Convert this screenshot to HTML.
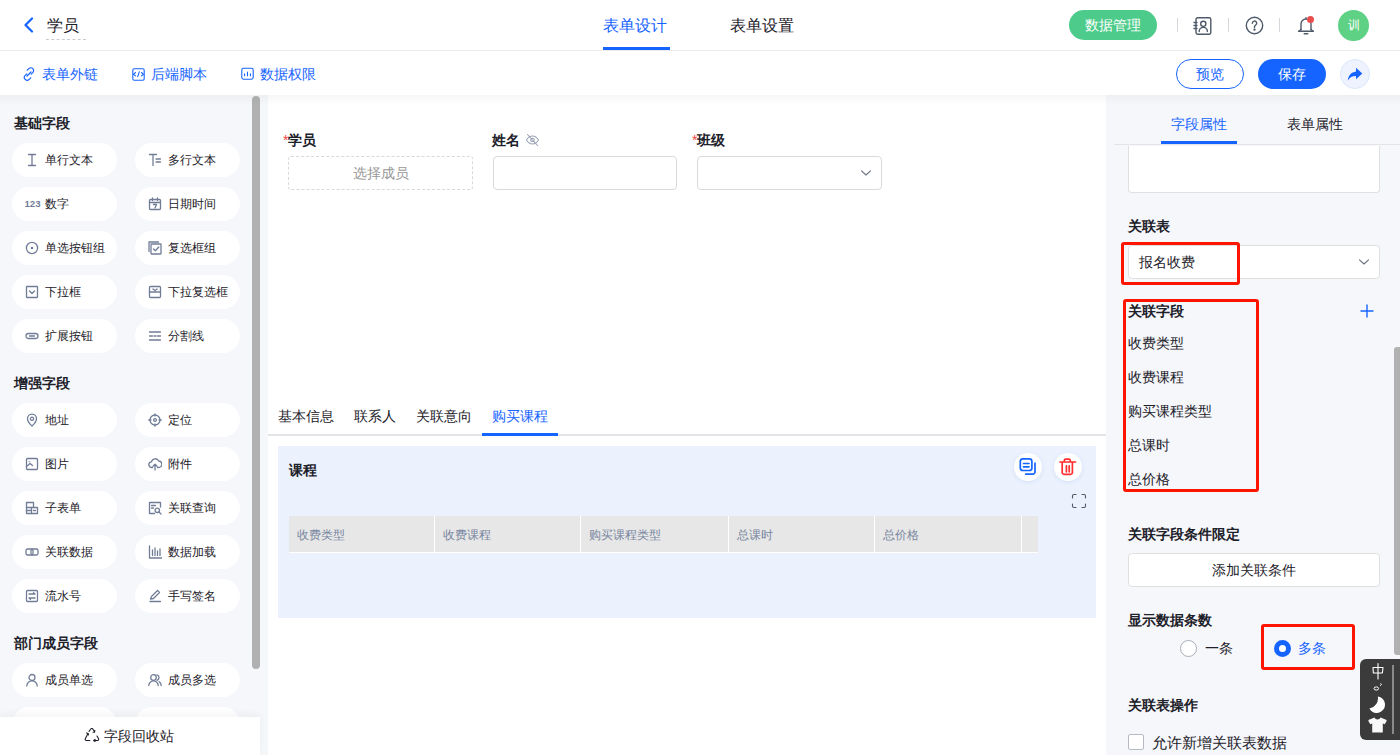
<!DOCTYPE html>
<html><head><meta charset="utf-8">
<style>
*{box-sizing:border-box;margin:0;padding:0}
html,body{width:1400px;height:755px;overflow:hidden;background:#fff;font-family:"Liberation Sans",sans-serif;font-size:14px;color:#1d2129}
.a{position:absolute}
.blue{color:#1664ff}
svg{display:block}
/* header */
#hdr{left:0;top:0;width:1400px;height:51px;border-bottom:1px solid #ebebeb;background:#fff}
#tb{left:0;top:51px;width:1400px;height:44px;background:#fff}
.tbi{top:66px;font-size:14px;color:#1664ff;line-height:16px;white-space:nowrap}
.sep{top:18px;width:1px;height:14px;background:#d5d7dc}
/* left */
#left{left:0;top:95px;width:268px;height:660px;background:#f5f7fb}
.sec{font-weight:bold;font-size:14px;line-height:16px;color:#1d2129;left:14px}
.pill{width:105px;height:34px;border-radius:17px;background:#fff;font-size:12px;line-height:34px;color:#1d2129;white-space:nowrap}
.pill .t{position:absolute;left:33px;top:0}
.pill svg{position:absolute;left:13px;top:10px}
#canvas{left:268px;top:95px;width:838px;height:660px;background:#fff}
#right{left:1106px;top:95px;width:294px;height:660px;background:#f5f7fb}
.shadow{left:0;top:95px;width:1400px;height:10px;background:linear-gradient(rgba(0,0,0,0.035),rgba(0,0,0,0))}
.lbl{font-weight:bold;font-size:14px;line-height:16px;color:#1d2129;white-space:nowrap}
.req{color:#f53f3f;font-weight:normal}
.rsec{left:1128px;font-weight:bold;font-size:14px;line-height:16px;color:#1d2129;white-space:nowrap}
.fld{left:1128px;font-size:14px;line-height:16px;color:#1d2129;white-space:nowrap}
.th{top:527px;font-size:12px;line-height:16px;color:#7886a0;white-space:nowrap}
.redbox{border:3px solid #ff1400;border-radius:3px}
</style></head><body>

<!-- HEADER -->
<div id="hdr" class="a"></div>
<svg class="a" style="left:22px;top:17px" width="14" height="16" viewBox="0 0 14 16"><path d="M10 1.5 L3.5 8 L10 14.5" fill="none" stroke="#1664ff" stroke-width="2.2" stroke-linecap="round" stroke-linejoin="round"/></svg>
<div class="a" style="left:47px;top:17px;font-size:16px;line-height:18px;color:#1d2129">学员</div>
<div class="a" style="left:46px;top:39px;width:40px;height:0;border-top:1px dashed #ccc"></div>

<div class="a blue" style="left:603px;top:17px;font-size:16px;line-height:18px">表单设计</div>
<div class="a" style="left:603px;top:47px;width:67px;height:3px;background:#1664ff"></div>
<div class="a" style="left:730px;top:17px;font-size:16px;line-height:18px;color:#1d2129">表单设置</div>

<div class="a" style="left:1069px;top:10px;width:88px;height:30px;border-radius:15px;background:#4ccb8a;color:#fff;font-size:14px;line-height:30px;text-align:center">数据管理</div>
<div class="a sep" style="left:1177px"></div>
<div class="a sep" style="left:1228px"></div>
<div class="a sep" style="left:1279px"></div>
<svg class="a" style="left:1193px;top:17px" width="19" height="18" viewBox="0 0 19 18" fill="none" stroke="#4e5969" stroke-width="1.4" stroke-linecap="round" stroke-linejoin="round"><rect x="3" y="0.8" width="14.8" height="16.4" rx="1.6"/><path d="M1 5.5h3M1 8.5h3M1 11.5h3"/><circle cx="10.3" cy="6.8" r="2.6"/><path d="M6.2 14.5a4.1 4.1 0 0 1 8.2 0"/></svg>
<svg class="a" style="left:1245px;top:16px" width="19" height="19" viewBox="0 0 19 19" fill="none" stroke="#4e5969" stroke-width="1.4" stroke-linecap="round" stroke-linejoin="round"><circle cx="9.5" cy="9.5" r="8.2"/><path d="M7.3 7.3a2.2 2.2 0 1 1 3.3 1.9c-.7.4-1.1.9-1.1 1.6v.7"/><circle cx="9.5" cy="13.6" r="0.5" fill="#4e5969"/></svg>
<svg class="a" style="left:1297px;top:16px" width="18" height="19" viewBox="0 0 18 19" fill="none" stroke="#4e5969" stroke-width="1.4" stroke-linecap="round" stroke-linejoin="round"><path d="M9 1.6v1.2M4 13.5V8a5 5 0 0 1 10 0v5.5M1.8 15.2h14.4M7.2 17.8h3.6"/><path d="M4 13.5l-2.2 1.7M14 13.5l2.2 1.7"/></svg>
<div class="a" style="left:1307px;top:16px;width:7px;height:7px;border-radius:50%;background:#eb4d4d"></div>
<div class="a" style="left:1338px;top:10px;width:31px;height:31px;border-radius:50%;background:#5fd185;color:#fff;font-size:12px;line-height:31px;text-align:center">训</div>

<!-- TOOLBAR -->
<div id="tb" class="a"></div>
<svg class="a" style="left:22px;top:67px" width="14" height="14" viewBox="0 0 14 14" fill="none" stroke="#1664ff" stroke-width="1.2" stroke-linecap="round"><path d="M5.2 3.2l1.6-1.6a2.8 2.8 0 0 1 4 4L9.2 7.2M8.8 10.8l-1.6 1.6a2.8 2.8 0 0 1-4-4l1.6-1.6M5 9l4-4"/></svg>
<svg class="a" style="left:132px;top:68px" width="13" height="13" viewBox="0 0 13 13" fill="none" stroke="#1664ff" stroke-width="1.1" stroke-linecap="round" stroke-linejoin="round"><rect x="0.8" y="0.8" width="11.4" height="11.4" rx="1.4"/><path d="M3.5 4.5L1.5 6.3l2 1.6M9.5 4.5l2 1.8-2 1.6M7.3 3.8L5.7 8.6"/></svg>
<svg class="a" style="left:241px;top:67px" width="13" height="13" viewBox="0 0 13 13" fill="none" stroke="#1664ff" stroke-width="1.1" stroke-linecap="round"><rect x="0.8" y="1.3" width="11.4" height="10.9" rx="1.6"/><path d="M3.6 6.8v2M6.5 5v3.8M9.4 6.8v2"/></svg>
<div class="a tbi" style="left:42px">表单外链</div>
<div class="a tbi" style="left:151px">后端脚本</div>
<div class="a tbi" style="left:260px">数据权限</div>

<div class="a" style="left:1176px;top:59px;width:68px;height:30px;border:1px solid #1664ff;border-radius:15px;color:#1664ff;font-size:14px;line-height:28px;text-align:center">预览</div>
<div class="a" style="left:1258px;top:59px;width:68px;height:30px;border-radius:15px;background:#1664ff;color:#fff;font-size:14px;line-height:30px;text-align:center">保存</div>
<div class="a" style="left:1340px;top:59px;width:30px;height:30px;border-radius:50%;background:#eef3ff;border:1px solid #dbe5fb"></div>

<svg class="a" style="left:1347px;top:67px" width="16" height="15" viewBox="0 0 16 15"><path d="M9 0.8L15.3 6.6 9 12.3V9.1C5.4 9 2.8 10.2 0.8 13.6 1.2 8.6 4.1 5.2 9 4.5z" fill="#1664ff"/></svg>
<!-- LEFT -->
<div id="left" class="a"></div>
<div id="canvas" class="a"></div>
<div id="right" class="a"></div>
<div class="a sec" style="top:115px">基础字段</div>
<div class="a sec" style="top:375px">增强字段</div>
<div class="a sec" style="top:635px">部门成员字段</div>
<div class="a pill" style="left:12px;top:143px"><svg width="14" height="14" viewBox="0 0 14 14" fill="none" stroke="#717d97" stroke-width="1.3" stroke-linecap="round" stroke-linejoin="round"><path d="M3.5 1.5h7M3.5 12.5h7M7 1.5v11"/></svg><span class="t">单行文本</span></div>
<div class="a pill" style="left:135px;top:143px"><svg width="14" height="14" viewBox="0 0 14 14" fill="none" stroke="#717d97" stroke-width="1.3" stroke-linecap="round" stroke-linejoin="round"><path d="M1.5 1.5h7M5 1.5v11M8 6h4.5M8 9h4.5"/></svg><span class="t">多行文本</span></div>
<div class="a pill" style="left:12px;top:187px"><svg width="16" height="14" viewBox="0 0 16 14"><text x="-0.5" y="10.2" style="font-family:'Liberation Sans',sans-serif;font-weight:bold;font-size:9.6px" fill="#717d97">123</text></svg><span class="t">数字</span></div>
<div class="a pill" style="left:135px;top:187px"><svg width="14" height="14" viewBox="0 0 14 14" fill="none" stroke="#717d97" stroke-width="1.3" stroke-linecap="round" stroke-linejoin="round"><rect x="1.5" y="2.5" width="11" height="10" rx="1"/><path d="M1.5 5.5h11M4.5 1v2.5M9.5 1v2.5M5.5 7.5h3l-1.5 3.5"/></svg><span class="t">日期时间</span></div>
<div class="a pill" style="left:12px;top:231px"><svg width="14" height="14" viewBox="0 0 14 14" fill="none" stroke="#717d97" stroke-width="1.3" stroke-linecap="round" stroke-linejoin="round"><circle cx="7" cy="7" r="5.6"/><circle cx="7" cy="7" r="1.3" fill="#717d97" stroke="none"/></svg><span class="t">单选按钮组</span></div>
<div class="a pill" style="left:135px;top:231px"><svg width="14" height="14" viewBox="0 0 14 14" fill="none" stroke="#717d97" stroke-width="1.3" stroke-linecap="round" stroke-linejoin="round"><path d="M1 10.5V1h9.5"/><rect x="3" y="3" width="10" height="10" rx="0.5"/><path d="M5.5 8l1.8 1.8L10.8 6"/></svg><span class="t">复选框组</span></div>
<div class="a pill" style="left:12px;top:275px"><svg width="14" height="14" viewBox="0 0 14 14" fill="none" stroke="#717d97" stroke-width="1.3" stroke-linecap="round" stroke-linejoin="round"><rect x="1.5" y="1.5" width="11" height="11" rx="0.5"/><path d="M4.5 6l2.5 2.5L9.5 6"/></svg><span class="t">下拉框</span></div>
<div class="a pill" style="left:135px;top:275px"><svg width="14" height="14" viewBox="0 0 14 14" fill="none" stroke="#717d97" stroke-width="1.3" stroke-linecap="round" stroke-linejoin="round"><rect x="1.5" y="1.5" width="11" height="11" rx="1"/><path d="M1.5 7h11M5 4l2 1.5L9 4"/></svg><span class="t">下拉复选框</span></div>
<div class="a pill" style="left:12px;top:319px"><svg width="14" height="14" viewBox="0 0 14 14" fill="none" stroke="#717d97" stroke-width="1.3" stroke-linecap="round" stroke-linejoin="round"><rect x="1" y="4.5" width="12" height="5" rx="2.5"/><path d="M4.5 7h5"/></svg><span class="t">扩展按钮</span></div>
<div class="a pill" style="left:135px;top:319px"><svg width="14" height="14" viewBox="0 0 14 14" fill="none" stroke="#717d97" stroke-width="1.3" stroke-linecap="round" stroke-linejoin="round"><path d="M1.5 3h11M1.5 11h11M1.5 7h3M6 7h2M9.5 7h3"/></svg><span class="t">分割线</span></div>
<div class="a pill" style="left:12px;top:403px"><svg width="14" height="14" viewBox="0 0 14 14" fill="none" stroke="#717d97" stroke-width="1.3" stroke-linecap="round" stroke-linejoin="round"><path d="M7 13s-4.5-4.2-4.5-7.3A4.5 4.5 0 0 1 11.5 5.7C11.5 8.8 7 13 7 13z"/><circle cx="7" cy="5.8" r="1.6"/></svg><span class="t">地址</span></div>
<div class="a pill" style="left:135px;top:403px"><svg width="14" height="14" viewBox="0 0 14 14" fill="none" stroke="#717d97" stroke-width="1.3" stroke-linecap="round" stroke-linejoin="round"><circle cx="7" cy="7" r="5"/><circle cx="7" cy="7" r="1.4"/><path d="M7 0.8v2.2M7 11v2.2M0.8 7h2.2M11 7h2.2"/></svg><span class="t">定位</span></div>
<div class="a pill" style="left:12px;top:447px"><svg width="14" height="14" viewBox="0 0 14 14" fill="none" stroke="#717d97" stroke-width="1.3" stroke-linecap="round" stroke-linejoin="round"><rect x="1.5" y="1.5" width="11" height="11" rx="1"/><path d="M1.5 9.5l3.5-3 2.5 2"/><circle cx="4.5" cy="4.5" r="0.2"/></svg><span class="t">图片</span></div>
<div class="a pill" style="left:135px;top:447px"><svg width="14" height="14" viewBox="0 0 14 14" fill="none" stroke="#717d97" stroke-width="1.3" stroke-linecap="round" stroke-linejoin="round"><path d="M4.5 10.5H3.8a2.8 2.8 0 0 1-.3-5.6A3.8 3.8 0 0 1 10.7 4a3.2 3.2 0 0 1-.2 6.5h-1"/><path d="M7 13V7.5M5 9.3L7 7.3l2 2"/></svg><span class="t">附件</span></div>
<div class="a pill" style="left:12px;top:491px"><svg width="14" height="14" viewBox="0 0 14 14" fill="none" stroke="#717d97" stroke-width="1.3" stroke-linecap="round" stroke-linejoin="round"><path d="M6.5 12.5h-5v-11h7v4"/><rect x="6.5" y="6.5" width="6" height="6"/><path d="M1.5 6.5h5M1.5 9.5h5M8.5 9.5h2"/></svg><span class="t">子表单</span></div>
<div class="a pill" style="left:135px;top:491px"><svg width="14" height="14" viewBox="0 0 14 14" fill="none" stroke="#717d97" stroke-width="1.3" stroke-linecap="round" stroke-linejoin="round"><path d="M12.5 6V1.5h-11v11h5"/><path d="M3.5 4.5h4M3.5 7h2"/><circle cx="9.3" cy="9.3" r="2.2"/><path d="M11 11l2 2"/></svg><span class="t">关联查询</span></div>
<div class="a pill" style="left:12px;top:535px"><svg width="14" height="14" viewBox="0 0 14 14" fill="none" stroke="#717d97" stroke-width="1.3" stroke-linecap="round" stroke-linejoin="round"><rect x="1" y="4" width="7" height="6" rx="1.5"/><rect x="6" y="4" width="7" height="6" rx="1.5"/></svg><span class="t">关联数据</span></div>
<div class="a pill" style="left:135px;top:535px"><svg width="14" height="14" viewBox="0 0 14 14" fill="none" stroke="#717d97" stroke-width="1.3" stroke-linecap="round" stroke-linejoin="round"><path d="M1.5 1v12h12M4.5 5v5.5M7 3v7.5M9.5 6v4.5M12 4v6.5"/></svg><span class="t">数据加载</span></div>
<div class="a pill" style="left:12px;top:579px"><svg width="14" height="14" viewBox="0 0 14 14" fill="none" stroke="#717d97" stroke-width="1.3" stroke-linecap="round" stroke-linejoin="round"><rect x="1.5" y="1.5" width="11" height="11" rx="1"/><path d="M4 5h6l-1.5-1.3M10 9H4l1.5 1.3"/></svg><span class="t">流水号</span></div>
<div class="a pill" style="left:135px;top:579px"><svg width="14" height="14" viewBox="0 0 14 14" fill="none" stroke="#717d97" stroke-width="1.3" stroke-linecap="round" stroke-linejoin="round"><path d="M2 12.5h10.5M2.5 10l1-2.5 6-6 2 2-6 6z"/></svg><span class="t">手写签名</span></div>
<div class="a pill" style="left:12px;top:663px"><svg width="14" height="14" viewBox="0 0 14 14" fill="none" stroke="#717d97" stroke-width="1.3" stroke-linecap="round" stroke-linejoin="round"><circle cx="7" cy="4.5" r="3"/><path d="M1.8 13a5.2 5.2 0 0 1 10.4 0"/></svg><span class="t">成员单选</span></div>
<div class="a pill" style="left:135px;top:663px"><svg width="14" height="14" viewBox="0 0 14 14" fill="none" stroke="#717d97" stroke-width="1.3" stroke-linecap="round" stroke-linejoin="round"><circle cx="5.5" cy="4.5" r="2.8"/><path d="M0.8 12.5a4.7 4.7 0 0 1 9.4 0M9 1.9a2.8 2.8 0 0 1 0 5.4M11.2 8.7a4.7 4.7 0 0 1 2 3.8"/></svg><span class="t">成员多选</span></div>
<div class="a pill" style="left:12px;top:707px"><svg width="14" height="14" viewBox="0 0 14 14" fill="none" stroke="#717d97" stroke-width="1.3" stroke-linecap="round" stroke-linejoin="round"><circle cx="7" cy="4.5" r="3"/><path d="M1.8 13a5.2 5.2 0 0 1 10.4 0"/></svg><span class="t">部门单选</span></div>
<div class="a pill" style="left:135px;top:707px"><svg width="14" height="14" viewBox="0 0 14 14" fill="none" stroke="#717d97" stroke-width="1.3" stroke-linecap="round" stroke-linejoin="round"><circle cx="5.5" cy="4.5" r="2.8"/><path d="M0.8 12.5a4.7 4.7 0 0 1 9.4 0M9 1.9a2.8 2.8 0 0 1 0 5.4M11.2 8.7a4.7 4.7 0 0 1 2 3.8"/></svg><span class="t">部门多选</span></div>
<!-- scrollbar left -->
<div class="a" style="left:252px;top:96px;width:8px;height:573px;border-radius:4px;background:#b1b1b1"></div>
<!-- recycle -->
<div class="a" style="left:0;top:717px;width:260px;height:38px;background:#fff;box-shadow:0 -3px 8px rgba(0,0,0,0.045)"></div>
<svg class="a" style="left:84px;top:728px" width="16" height="14" viewBox="0 0 16 14" fill="none" stroke="#1d2129" stroke-width="1.1" stroke-linecap="round" stroke-linejoin="round"><path d="M5 3.3L6.8 1a1.2 1.2 0 0 1 2 0l1.8 3M4 5.5L1.3 10.8a1.2 1.2 0 0 0 1 1.7H5.8M9.8 12.5H13.6a1.2 1.2 0 0 0 1-1.7L13 8"/><path d="M10.6 4l.2-1.6M10.6 4l-1.6.2M4 5.5l-1.5-.5M4 5.5l.5 1.5M9.8 12.5l1.3-1.2M9.8 12.5l1.3 1.1"/></svg>
<div class="a" style="left:104px;top:728px;font-size:14px;line-height:16px;color:#1d2129">字段回收站</div>
<!-- form fields -->
<div class="a lbl" style="left:283px;top:132px"><span class="req">*</span>学员</div>
<div class="a" style="left:288px;top:156px;width:185px;height:34px;border:1px dashed #d9d9d9;border-radius:3px;color:#999;font-size:14px;line-height:32px;text-align:center">选择成员</div>

<div class="a lbl" style="left:492px;top:132px">姓名</div>
<svg class="a" style="left:525px;top:133px" width="15" height="14" viewBox="0 0 15 14" fill="none" stroke="#9aa3b5" stroke-width="1.1" stroke-linecap="round"><path d="M1.5 7c1.6-2.6 3.6-4 6-4s4.4 1.4 6 4c-1.6 2.6-3.6 4-6 4s-4.4-1.4-6-4z"/><circle cx="7.5" cy="7" r="1.8"/><path d="M2.5 1.5l10 11"/></svg>
<div class="a" style="left:493px;top:156px;width:184px;height:34px;border:1px solid #dadada;border-radius:4px;background:#fff"></div>

<div class="a lbl" style="left:692px;top:132px"><span class="req">*</span>班级</div>
<div class="a" style="left:697px;top:156px;width:185px;height:34px;border:1px solid #dadada;border-radius:4px;background:#fff"></div>
<svg class="a" style="left:860px;top:169px" width="12" height="8" viewBox="0 0 12 8" fill="none" stroke="#6b7280" stroke-width="1.1" stroke-linecap="round" stroke-linejoin="round"><path d="M1.5 1.8L6 6l4.5-4.2"/></svg>

<!-- tabs -->
<div class="a" style="left:268px;top:434px;width:838px;height:2px;background:#e3e4e8"></div>
<div class="a" style="left:278px;top:408px;font-size:14px;line-height:16px;color:#1d2129;white-space:nowrap">基本信息</div>
<div class="a" style="left:354px;top:408px;font-size:14px;line-height:16px;color:#1d2129;white-space:nowrap">联系人</div>
<div class="a" style="left:416px;top:408px;font-size:14px;line-height:16px;color:#1d2129;white-space:nowrap">关联意向</div>
<div class="a" style="left:492px;top:408px;font-size:14px;line-height:16px;color:#1664ff;white-space:nowrap">购买课程</div>
<div class="a" style="left:482px;top:433px;width:76px;height:3px;background:#1664ff"></div>

<!-- sub-table block -->
<div class="a" style="left:278px;top:446px;width:818px;height:172px;background:#ebf2fe"></div>
<div class="a lbl" style="left:289px;top:462px">课程</div>
<div class="a" style="left:1014px;top:453px;width:28px;height:28px;border-radius:50%;background:#fff;box-shadow:0 1px 4px rgba(30,80,160,0.10)"></div>
<svg class="a" style="left:1014px;top:453px" width="28" height="28" viewBox="0 0 28 28" fill="none" stroke="#1664ff" stroke-width="1.7" stroke-linecap="round" stroke-linejoin="round"><rect x="6.3" y="5.9" width="11.6" height="11.6" rx="2.6"/><path d="M9.5 10.5h5.5M9.5 13.8h5.5"/><path d="M21 10.2v8.6a2.4 2.4 0 0 1-2.4 2.4H11.8"/></svg>
<div class="a" style="left:1054px;top:453px;width:28px;height:28px;border-radius:50%;background:#fff;box-shadow:0 1px 4px rgba(30,80,160,0.10)"></div>
<svg class="a" style="left:1054px;top:453px" width="28" height="28" viewBox="0 0 28 28" fill="none" stroke="#ff2d2d" stroke-width="1.7" stroke-linecap="round" stroke-linejoin="round"><path d="M6 9h15.5M10.3 9V7.6a1.5 1.5 0 0 1 1.5-1.5h3a1.5 1.5 0 0 1 1.5 1.5V9M8.2 9.2v10.3a1.8 1.8 0 0 0 1.8 1.8h6.6a1.8 1.8 0 0 0 1.8-1.8V9.2M12.4 12.8v6M15.2 12.8v6"/></svg>
<svg class="a" style="left:1071px;top:493px" width="16" height="16" viewBox="0 0 16 16" fill="none" stroke="#4f596b" stroke-width="1.1" stroke-linecap="round"><path d="M1.5 5V3a1.5 1.5 0 0 1 1.5-1.5h2M11 1.5h2A1.5 1.5 0 0 1 14.5 3v2M14.5 11v2a1.5 1.5 0 0 1-1.5 1.5h-2M5 14.5H3A1.5 1.5 0 0 1 1.5 13v-2"/></svg>

<div class="a" style="left:289px;top:516px;width:749px;height:37px;background:#e7e7e7;border-bottom:1px solid #fff"></div>
<div class="a" style="left:434px;top:516px;width:1px;height:36px;background:#fff"></div>
<div class="a" style="left:580px;top:516px;width:1px;height:36px;background:#fff"></div>
<div class="a" style="left:728px;top:516px;width:1px;height:36px;background:#fff"></div>
<div class="a" style="left:874px;top:516px;width:1px;height:36px;background:#fff"></div>
<div class="a" style="left:1021px;top:516px;width:1px;height:36px;background:#fff"></div>
<div class="a th" style="left:297px">收费类型</div>
<div class="a th" style="left:443px">收费课程</div>
<div class="a th" style="left:589px">购买课程类型</div>
<div class="a th" style="left:737px">总课时</div>
<div class="a th" style="left:883px">总价格</div>

<!-- right tabs -->
<div class="a blue" style="left:1171px;top:116px;font-size:14px;line-height:16px;white-space:nowrap">字段属性</div>
<div class="a" style="left:1287px;top:116px;font-size:14px;line-height:16px;color:#1d2129;white-space:nowrap">表单属性</div>
<div class="a" style="left:1114px;top:144px;width:286px;height:1px;background:#e3e4e8"></div>
<div class="a" style="left:1161px;top:141px;width:76px;height:3px;background:#1664ff"></div>
<!-- textarea -->
<div class="a" style="left:1128px;top:146px;width:252px;height:47px;background:#fff;border:1px solid #e0e0e0;border-top:none;border-radius:0 0 4px 4px"></div>

<div class="a rsec" style="top:218px">关联表</div>
<div class="a" style="left:1128px;top:245px;width:252px;height:34px;background:#fff;border:1px solid #e0e0e0;border-radius:4px"></div>
<div class="a fld" style="left:1139px;top:254px">报名收费</div>
<svg class="a" style="left:1358px;top:258px" width="12" height="8" viewBox="0 0 12 8" fill="none" stroke="#6b7280" stroke-width="1.1" stroke-linecap="round" stroke-linejoin="round"><path d="M1.5 1.8L6 6l4.5-4.2"/></svg>
<div class="a redbox" style="left:1121px;top:242px;width:119px;height:43px"></div>

<div class="a rsec" style="top:303px">关联字段</div>
<svg class="a" style="left:1360px;top:304px" width="14" height="14" viewBox="0 0 14 14" fill="none" stroke="#1664ff" stroke-width="1.4" stroke-linecap="round"><path d="M7 1v12M1 7h12"/></svg>
<div class="a fld" style="top:335px">收费类型</div>
<div class="a fld" style="top:369px">收费课程</div>
<div class="a fld" style="top:403px">购买课程类型</div>
<div class="a fld" style="top:437px">总课时</div>
<div class="a fld" style="top:471px">总价格</div>
<div class="a redbox" style="left:1123px;top:299px;width:136px;height:193px"></div>

<div class="a rsec" style="top:526px">关联字段条件限定</div>
<div class="a" style="left:1128px;top:553px;width:252px;height:34px;background:#fff;border:1px solid #e0e0e0;border-radius:4px;font-size:14px;line-height:32px;text-align:center;color:#1d2129">添加关联条件</div>

<div class="a rsec" style="top:612px">显示数据条数</div>
<div class="a" style="left:1180px;top:640px;width:17px;height:17px;border:1px solid #a9aeb8;border-radius:50%;background:#fff"></div>
<div class="a fld" style="left:1205px;top:640px">一条</div>
<div class="a" style="left:1274px;top:640px;width:17px;height:17px;border:5px solid #1664ff;border-radius:50%;background:#fff"></div>
<div class="a fld" style="left:1298px;top:640px;color:#1664ff">多条</div>
<div class="a redbox" style="left:1261px;top:624px;width:94px;height:46px"></div>

<div class="a rsec" style="top:697px">关联表操作</div>
<div class="a" style="left:1128px;top:734px;width:16px;height:16px;border:1px solid #b5bac4;border-radius:2px;background:#fff"></div>
<div class="a fld" style="left:1152px;top:735px;font-size:14.7px">允许新增关联表数据</div>

<!-- right scrollbar -->
<div class="a" style="left:1394px;top:347px;width:6px;height:308px;border-radius:3px 0 0 3px;background:#b1b1b1"></div>
<!-- IME widget -->
<div class="a" style="left:1360px;top:659px;width:40px;height:81px;border-radius:6px 0 0 6px;background:#3b3b3b"></div>
<div class="a" style="left:1392px;top:665px;width:2px;height:69px;background:#8a8a8a"></div>
<svg class="a" style="left:1371px;top:662px" width="14" height="18" viewBox="0 0 14 18" fill="none" stroke="#fff" stroke-width="1.1" stroke-linecap="round" stroke-linejoin="round"><path d="M2 5.5h10l-.6 5.5H2.3zM7 1.5v15.5"/></svg>
<svg class="a" style="left:1372px;top:682px" width="12" height="10" viewBox="0 0 12 10" fill="none" stroke="#fff" stroke-width="1"><ellipse cx="4.3" cy="6.5" rx="2.3" ry="1.6"/><path d="M8.3 1.8c.8-.3 1.4.3 1 1-.3.5-.9.8-1.3 1"/></svg>
<svg class="a" style="left:1369px;top:696px" width="17" height="18" viewBox="0 0 17 18"><path d="M8.8 0.4A8.3 8.3 0 1 1 0.4 12.6 10.5 10.5 0 0 0 8.8 0.4z" fill="#fff"/></svg>
<svg class="a" style="left:1368px;top:717px" width="19" height="16" viewBox="0 0 19 16"><path d="M6.5 0.5L1 2.8C.4 3.1.2 3.7.5 4.3L2.3 7.2 4.2 6.5V15.5h10.6V6.5l1.9.7 1.8-2.9c.3-.6.1-1.2-.5-1.5L12.5.5C12 1.8 10.9 2.5 9.5 2.5S7 1.8 6.5.5z" fill="#f8f8f8"/></svg>

<div class="a shadow"></div>

</body></html>
